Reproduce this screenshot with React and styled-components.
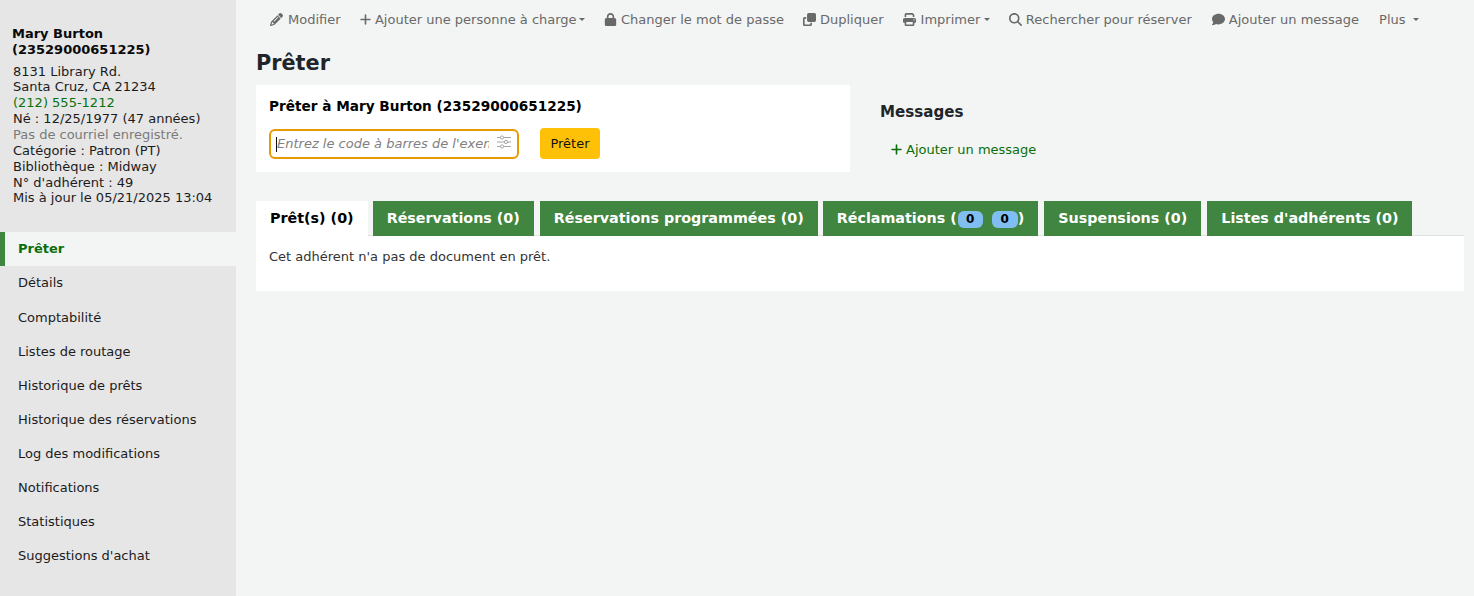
import React from "react";
import styled, { createGlobalStyle } from "styled-components";
import { FaPencil, FaPlus, FaLock, FaClone, FaPrint, FaMagnifyingGlass, FaComment } from "react-icons/fa6";

const GlobalStyle = createGlobalStyle`
  html, body { margin: 0; padding: 0; height: 100%; }
  body {
    background: #f3f5f4;
    font-family: "DejaVu Sans", sans-serif;
    font-size: 13px;
    color: #212529;
  }
  #root { height: 100%; }
`;

const Page = styled.div`
  display: flex;
  width: 1474px;
  height: 596px;
  overflow: hidden;
`;

const Sidebar = styled.aside`
  width: 236px;
  flex: none;
  background: #e6e6e6;
  padding-top: 26px;
`;

const PatronName = styled.h5`
  margin: 0 0 6px 12px;
  font-size: 13px;
  line-height: 16px;
  font-weight: 700;
  color: #0a0a0a;
`;

const PatronInfo = styled.div`
  margin: 0 0 26.4px 13px;
  line-height: 16px;
  color: #1c1c1c;
`;

const InfoLine = styled.div`
  color: ${({ $tone }) => ($tone === "link" ? "#0b720b" : $tone === "muted" ? "#7a7a7a" : "inherit")};

  &:first-child { margin-bottom: -1px; }
  &:last-child { margin-top: -1px; }
`;

const NavList = styled.nav`
  display: flex;
  flex-direction: column;
`;

const NavItem = styled.a`
  display: block;
  height: 34.1px;
  line-height: 34.1px;
  padding-left: ${({ $active }) => ($active ? "13px" : "18px")};
  color: ${({ $active }) => ($active ? "#0b6e0b" : "#1c1c1c")};
  font-weight: ${({ $active }) => ($active ? 700 : 400)};
  background: ${({ $active }) => ($active ? "#f3f5f4" : "transparent")};
  border-left: ${({ $active }) => ($active ? "5px solid #408540" : "none")};
`;

const Main = styled.main`
  flex: 1;
  min-width: 0;
  padding: 0 10px 0 20px;
`;

const Toolbar = styled.div`
  display: flex;
  align-items: center;
  height: 39px;
  padding-left: 14px;
  color: #696969;
`;

const ToolButton = styled.a`
  display: inline-flex;
  align-items: center;
  gap: ${({ $gap }) => $gap || 4}px;
  margin-right: ${({ $space }) => $space || 19}px;
  white-space: nowrap;

  svg { flex: none; }
`;

const Caret = styled.span`
  width: 0;
  height: 0;
  margin-left: -1px;
  border-top: 3px solid #696969;
  border-left: 3px solid transparent;
  border-right: 3px solid transparent;
`;

const Title = styled.h1`
  margin: 11px 0 8px;
  font-size: 20.8px;
  line-height: 27px;
  font-weight: 700;
  color: #212529;
`;

const TopRow = styled.div`
  display: flex;
  align-items: flex-start;
`;

const CheckoutCard = styled.form`
  width: 594px;
  height: 87px;
  box-sizing: border-box;
  background: #fff;
  padding: 13px 13px 0;
`;

const CardTitle = styled.h3`
  margin: 0 0 13px;
  font-size: 13.65px;
  line-height: 17px;
  font-weight: 700;
  color: #000;
`;

const CheckoutRow = styled.div`
  display: flex;
  align-items: center;
  gap: 21px;
`;

const BarcodeField = styled.div`
  display: flex;
  align-items: center;
  width: 250px;
  height: 30px;
  margin-top: 1px;
  box-sizing: border-box;
  border: 2px solid #e69a00;
  border-radius: 6px;
  padding: 0 6px 0 5px;
  background: #fff;
`;

const TextCursor = styled.span`
  width: 1px;
  height: 15px;
  flex: none;
  background: #111;
`;

const BarcodeInput = styled.input`
  flex: 1;
  min-width: 0;
  border: 0;
  outline: 0;
  padding: 0 0 2px;
  margin-right: 8px;
  background: transparent;
  font: italic 13px "DejaVu Sans", sans-serif;

  &::placeholder { color: #808080; opacity: 1; }
`;

const SlidersSvg = styled.svg`
  flex: none;
  margin-bottom: 4px;
`;

const SubmitButton = styled.button`
  width: 60px;
  height: 31px;
  border: 0;
  border-radius: 4px;
  background: #ffc107;
  color: #111;
  font: 13px "DejaVu Sans", sans-serif;
  padding: 0;
`;

const MessagesBlock = styled.section`
  margin-left: 30px;
  padding-top: 17px;
`;

const MessagesTitle = styled.h4`
  margin: 0 0 20px;
  font-size: 15.1px;
  line-height: 20px;
  font-weight: 700;
  color: #212529;
`;

const AddMessage = styled.a`
  display: inline-flex;
  align-items: center;
  gap: 3px;
  margin-left: 10px;
  color: #0b6e0b;
`;

const TabBar = styled.ul`
  display: flex;
  list-style: none;
  margin: 29px 0 0;
  padding: 0;
  height: 35px;
  border-bottom: 1px solid #dfe1e0;
  box-sizing: border-box;
`;

const Tab = styled.li`
  height: 35px;
  box-sizing: border-box;
  margin-right: ${({ $space }) => $space ?? 6}px;
  padding: 0 14px;
  line-height: 35px;
  font-size: 14.3px;
  font-weight: 700;
  white-space: nowrap;
  color: ${({ $active }) => ($active ? "#000" : "#fff")};
  background: ${({ $active }) => ($active ? "#fff" : "#408540")};
`;

const Badge = styled.span`
  display: inline-block;
  width: ${({ $wide }) => ($wide ? 26 : 25)}px;
  height: 17px;
  margin: ${({ $wide }) => ($wide ? "0" : "0 9px 0 1px")};
  border-radius: 6px;
  background: #80bdf0;
  color: #000;
  font-size: 12px;
  line-height: 17px;
  text-align: center;
`;

const TabPanel = styled.div`
  height: 55px;
  box-sizing: border-box;
  padding: 13px 13px 0;
  background: #fff;
  line-height: 16px;
  color: #333;
`;

const SlidersIcon = () => (
  <SlidersSvg width="14" height="14" viewBox="0 0 14 14" fill="none" stroke="#a5a5a5" strokeWidth="1">
    <path d="M0 2.5h14M0 7h14M0 11.5h14" />
    <circle cx="5" cy="2.5" r="1.6" fill="#fff" />
    <circle cx="9" cy="7" r="1.6" fill="#fff" />
    <circle cx="5" cy="11.5" r="1.6" fill="#fff" />
  </SlidersSvg>
);

const patronLines = [
  { text: "8131 Library Rd." },
  { text: "Santa Cruz, CA 21234" },
  { text: "(212) 555-1212", tone: "link" },
  { text: "Né : 12/25/1977 (47 années)" },
  { text: "Pas de courriel enregistré.", tone: "muted" },
  { text: "Catégorie : Patron (PT)" },
  { text: "Bibliothèque : Midway" },
  { text: "N° d'adhérent : 49" },
  { text: "Mis à jour le 05/21/2025 13:04" },
];

const navItems = [
  "Prêter",
  "Détails",
  "Comptabilité",
  "Listes de routage",
  "Historique de prêts",
  "Historique des réservations",
  "Log des modifications",
  "Notifications",
  "Statistiques",
  "Suggestions d'achat",
];

const App = () => {
  return (
    <Page>
      <GlobalStyle />
      <Sidebar>
        <PatronName>
          Mary Burton
          <br />
          (23529000651225)
        </PatronName>
        <PatronInfo>
          {patronLines.map((line) => (
            <InfoLine key={line.text} $tone={line.tone}>
              {line.text}
            </InfoLine>
          ))}
        </PatronInfo>
        <NavList>
          {navItems.map((item, i) => (
            <NavItem key={item} $active={i === 0}>
              {item}
            </NavItem>
          ))}
        </NavList>
      </Sidebar>

      <Main>
        <Toolbar>
          <ToolButton $gap={5} $space={18}><FaPencil size={13} />Modifier</ToolButton>
          <ToolButton $gap={3.4}><FaPlus size={13} />Ajouter une personne à charge<Caret /></ToolButton>
          <ToolButton><FaLock size={13} />Changer le mot de passe</ToolButton>
          <ToolButton><FaClone size={13} />Dupliquer</ToolButton>
          <ToolButton $gap={5}><FaPrint size={13} />Imprimer<Caret /></ToolButton>
          <ToolButton $gap={3.6} $space={20}><FaMagnifyingGlass size={13} />Rechercher pour réserver</ToolButton>
          <ToolButton $space={20}><FaComment size={13} />Ajouter un message</ToolButton>
          <ToolButton $gap={8}>Plus<Caret /></ToolButton>
        </Toolbar>

        <Title>Prêter</Title>

        <TopRow>
          <CheckoutCard>
            <CardTitle>Prêter à Mary Burton (23529000651225)</CardTitle>
            <CheckoutRow>
              <BarcodeField>
                <TextCursor />
                <BarcodeInput placeholder="Entrez le code à barres de l'exemplaire" />
                <SlidersIcon />
              </BarcodeField>
              <SubmitButton type="button">Prêter</SubmitButton>
            </CheckoutRow>
          </CheckoutCard>
          <MessagesBlock>
            <MessagesTitle>Messages</MessagesTitle>
            <AddMessage><FaPlus size={13} />Ajouter un message</AddMessage>
          </MessagesBlock>
        </TopRow>

        <TabBar>
          <Tab $active $space={5}>Prêt(s) (0)</Tab>
          <Tab>Réservations (0)</Tab>
          <Tab $space={5}>Réservations programmées (0)</Tab>
          <Tab>Réclamations (<Badge>0</Badge><Badge $wide>0</Badge>)</Tab>
          <Tab>Suspensions (0)</Tab>
          <Tab>Listes d'adhérents (0)</Tab>
        </TabBar>
        <TabPanel>Cet adhérent n'a pas de document en prêt.</TabPanel>
      </Main>
    </Page>
  );
};

export default App;
